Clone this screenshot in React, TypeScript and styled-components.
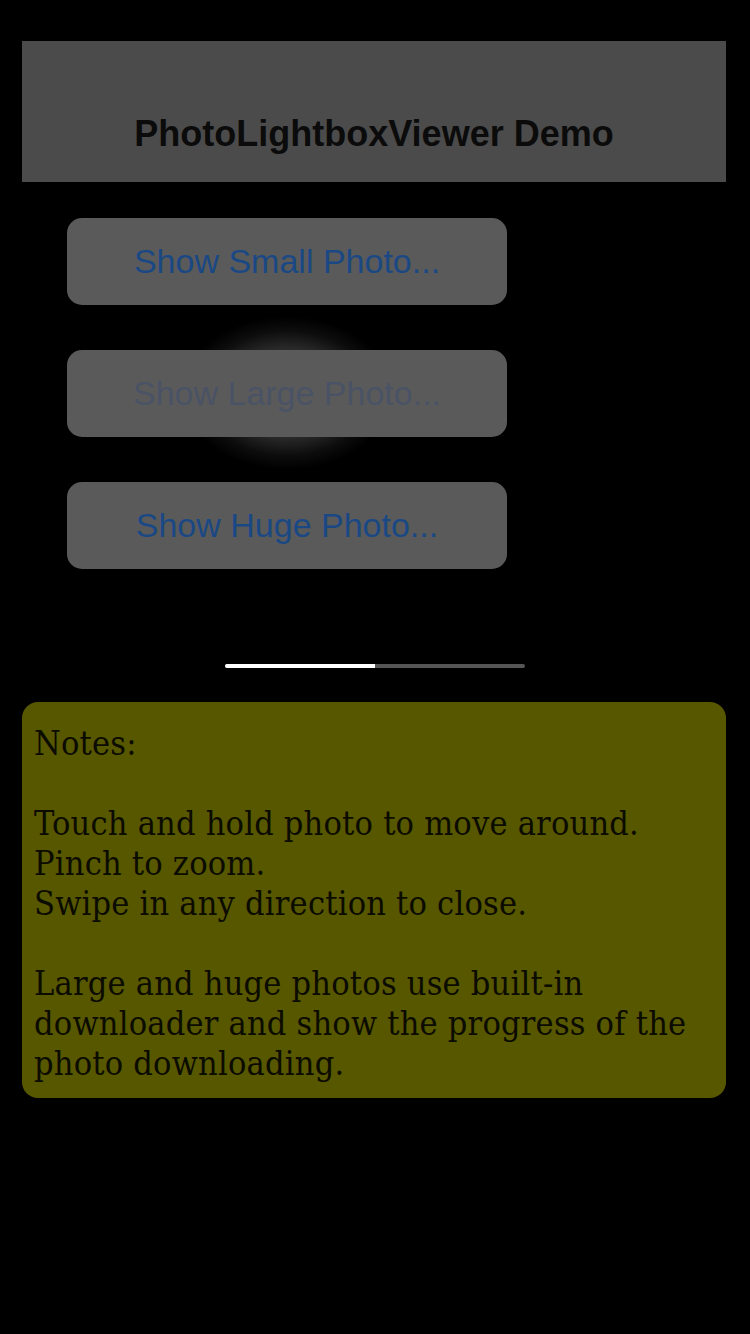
import React from "react";
import styled, { createGlobalStyle } from "styled-components";

const Global = createGlobalStyle`
  html, body { margin: 0; padding: 0; background: #000; }
  body { width: 750px; height: 1334px; overflow: hidden; }
`;

const Page = styled.div`
  width: 750px;
  height: 1334px;
  background: #000;
  padding: 41px 24px 0 22px;
  box-sizing: border-box;
  display: flex;
  flex-direction: column;
`;

const Header = styled.header`
  height: 141px;
  background: #4b4b4b;
  display: flex;
  align-items: flex-end;
  justify-content: center;
  padding-bottom: 28px;
  box-sizing: border-box;
`;

const Title = styled.h1`
  margin: 0;
  font-family: "Liberation Sans", Arial, sans-serif;
  font-weight: 700;
  font-size: 36px;
  line-height: 40px;
  color: #0b0b0b;
`;

const ButtonList = styled.div`
  position: relative;
  display: flex;
  flex-direction: column;
  gap: 45px;
  margin: 36px 0 0 45px;
  width: 440px;
`;

const Glow = styled.div`
  position: absolute;
  left: 110px;
  top: 95px;
  width: 220px;
  height: 160px;
  background: radial-gradient(
    ellipse closest-side,
    rgba(255, 255, 255, 0.32) 0%,
    rgba(255, 255, 255, 0.16) 56%,
    rgba(255, 255, 255, 0.05) 78%,
    rgba(255, 255, 255, 0) 96%
  );
`;

const Button = styled.button<{ $dim?: boolean }>`
  position: relative;
  height: 87px;
  border: none;
  border-radius: 15px;
  background: #5a5a5a;
  font-family: "Liberation Sans", Arial, sans-serif;
  font-size: 34px;
  color: ${(p) => (p.$dim ? "#4a5365" : "#1a4884")};
  padding: 0;
  cursor: pointer;
`;

const Progress = styled.div`
  margin: 95px 0 0 203px;
  width: 300px;
  height: 4px;
  background: #555;
  border-radius: 2px;
  overflow: hidden;
  display: flex;
`;

const ProgressFill = styled.div`
  height: 100%;
  background: #fff;
`;

const Notes = styled.div`
  margin-top: 34px;
  height: 396px;
  background: #575700;
  border-radius: 16px;
  padding: 21px 12px;
  box-sizing: border-box;
  font-family: "DejaVu Serif Condensed", "DejaVu Serif", "Liberation Serif", serif;
  font-stretch: condensed;
  font-size: 34px;
  letter-spacing: 0.2px;
  line-height: 40px;
  color: #0b0b00;
  white-space: pre-line;
`;

export default function App() {
  const progress = 0.5;
  return (
    <>
      <Global />
      <Page>
        <Header>
          <Title>PhotoLightboxViewer Demo</Title>
        </Header>
        <ButtonList>
          <Glow />
          <Button>Show Small Photo...</Button>
          <Button $dim>Show Large Photo...</Button>
          <Button>Show Huge Photo...</Button>
        </ButtonList>
        <Progress>
          <ProgressFill style={{ width: `${progress * 100}%` }} />
        </Progress>
        <Notes>
          {`Notes:

Touch and hold photo to move around.
Pinch to zoom.
Swipe in any direction to close.

Large and huge photos use built-in downloader and show the progress of the photo downloading.`}
        </Notes>
      </Page>
    </>
  );
}
